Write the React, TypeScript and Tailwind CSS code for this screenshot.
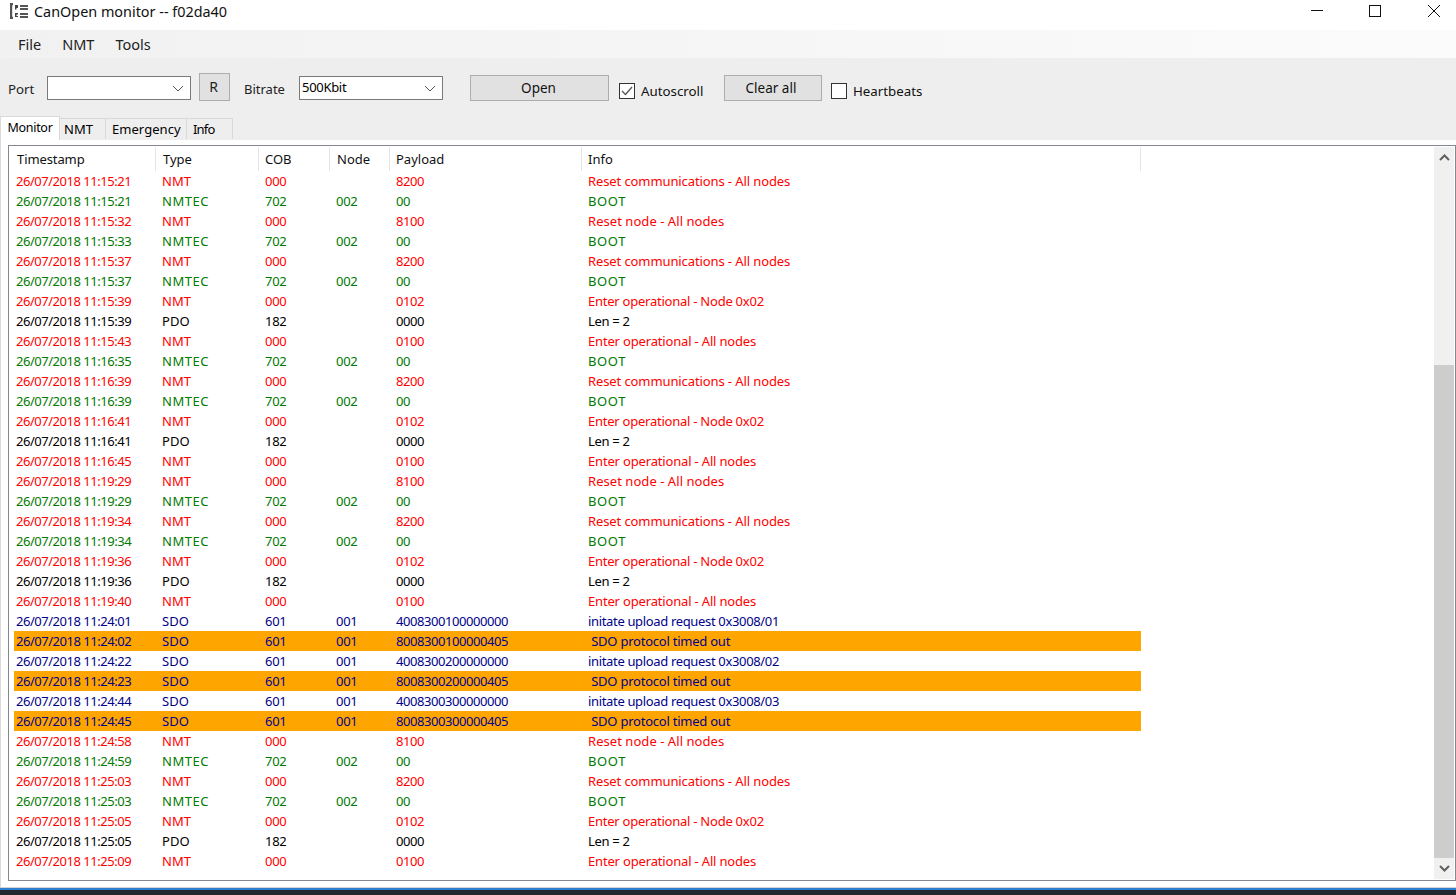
import React from 'react'

type Row = { t: string; k: string; cob: string; node: string; pay: string; info: string; color: string; tr: string; bg?: string }

const RED = 'text-[#ff0000]'
const GREEN = 'text-[#007a00]'
const BLACK = 'text-black'
const BLUE = 'text-[#00008b]'

const nmt = (t: string, pay: string, info: string, tr: string): Row => ({ t, k: 'NMT', cob: '000', node: '', pay, info, color: RED, tr })
const boot = (t: string): Row => ({ t, k: 'NMTEC', cob: '702', node: '002', pay: '00', info: 'BOOT', color: GREEN, tr: 'tracking-[0.6px]' })
const pdo = (t: string): Row => ({ t, k: 'PDO', cob: '182', node: '', pay: '0000', info: 'Len = 2', color: BLACK, tr: 'tracking-[-0.3px]' })
const req = (t: string, pay: string, info: string): Row => ({ t, k: 'SDO', cob: '601', node: '001', pay, info, color: BLUE, tr: 'tracking-[-0.34px]' })
const out = (t: string, pay: string): Row => ({ t, k: 'SDO', cob: '601', node: '001', pay, info: ' SDO protocol timed out', color: BLUE, tr: 'tracking-[-0.23px]', bg: 'bg-[#ffa500]' })

const rc = (t: string) => nmt(t, '8200', 'Reset communications - All nodes', 'tracking-[-0.1px]')
const rn = (t: string) => nmt(t, '8100', 'Reset node - All nodes', 'tracking-[0.05px]')
const eo2 = (t: string) => nmt(t, '0102', 'Enter operational - Node 0x02', 'tracking-[-0.24px]')
const eoa = (t: string) => nmt(t, '0100', 'Enter operational - All nodes', 'tracking-[-0.17px]')

const rows: Row[] = [
  rc('26/07/2018 11:15:21'),
  boot('26/07/2018 11:15:21'),
  rn('26/07/2018 11:15:32'),
  boot('26/07/2018 11:15:33'),
  rc('26/07/2018 11:15:37'),
  boot('26/07/2018 11:15:37'),
  eo2('26/07/2018 11:15:39'),
  pdo('26/07/2018 11:15:39'),
  eoa('26/07/2018 11:15:43'),
  boot('26/07/2018 11:16:35'),
  rc('26/07/2018 11:16:39'),
  boot('26/07/2018 11:16:39'),
  eo2('26/07/2018 11:16:41'),
  pdo('26/07/2018 11:16:41'),
  eoa('26/07/2018 11:16:45'),
  rn('26/07/2018 11:19:29'),
  boot('26/07/2018 11:19:29'),
  rc('26/07/2018 11:19:34'),
  boot('26/07/2018 11:19:34'),
  eo2('26/07/2018 11:19:36'),
  pdo('26/07/2018 11:19:36'),
  eoa('26/07/2018 11:19:40'),
  req('26/07/2018 11:24:01', '4008300100000000', 'initate upload request 0x3008/01'),
  out('26/07/2018 11:24:02', '8008300100000405'),
  req('26/07/2018 11:24:22', '4008300200000000', 'initate upload request 0x3008/02'),
  out('26/07/2018 11:24:23', '8008300200000405'),
  req('26/07/2018 11:24:44', '4008300300000000', 'initate upload request 0x3008/03'),
  out('26/07/2018 11:24:45', '8008300300000405'),
  rn('26/07/2018 11:24:58'),
  boot('26/07/2018 11:24:59'),
  rc('26/07/2018 11:25:03'),
  boot('26/07/2018 11:25:03'),
  eo2('26/07/2018 11:25:05'),
  pdo('26/07/2018 11:25:05'),
  eoa('26/07/2018 11:25:09'),
]

const COLS = 'grid w-[1127px] grid-cols-[142px_103px_71px_60px_192px_559px]'

function HeaderCell({ label, pad }: { label: string; pad: string }) {
  return (
    <div className={`flex h-6 items-center border-r border-[#e5e5e5] pt-[2px] text-[#111] ${pad}`}>
      {label}
    </div>
  )
}

function Caret({ up }: { up?: boolean }) {
  return (
    <svg width="11" height="7" viewBox="0 0 11 7">
      <path d={up ? 'M1 6 L5.5 1.5 L10 6' : 'M1 1 L5.5 5.5 L10 1'} fill="none" stroke="#606060" strokeWidth="2" />
    </svg>
  )
}

function Select({ width, value }: { width: string; value?: string }) {
  return (
    <div className={`flex h-6 items-center justify-between border border-[#7a7a7a] bg-white pl-[2px] pr-[6px] ${width}`}>
      <span className="text-[13px] tracking-[-0.3px]">{value}</span>
      <svg width="12" height="7" viewBox="0 0 12 7">
        <path d="M1 1 L6 6 L11 1" fill="none" stroke="#555" strokeWidth="1" />
      </svg>
    </div>
  )
}

function Check({ checked }: { checked?: boolean }) {
  return (
    <div className="flex h-4 w-4 items-center justify-center border border-[#333] bg-white">
      {checked && (
        <svg width="12" height="10" viewBox="0 0 12 10">
          <path d="M1 5 L4.5 8.5 L11 1" fill="none" stroke="#555" strokeWidth="1.3" />
        </svg>
      )}
    </div>
  )
}

export default function App() {
  return (
    <div className="flex h-[895px] w-[1456px] flex-col overflow-hidden bg-[#f0f0f0] font-['Noto_Sans',sans-serif] text-[13px] text-black">
      {/* title bar */}
      <div className="flex h-[30px] shrink-0 items-start bg-white">
        <svg className="ml-[10px] mr-[6px] mt-[3px]" width="18" height="16" viewBox="0 0 18 16">
          <path d="M3 1 H1 V15 H3" fill="none" stroke="#555" strokeWidth="2.4" />
          <path d="M5 2 H8 V5 H6.5 V6.5 H5 Z M5 10 H8 V11.5 H6.5 V13 H8 V14 H5 Z" fill="#444" />
          <path d="M10 3 H18 M10 6 H18 M10 11 H18 M10 14 H18" stroke="#555" strokeWidth="1.8" />
        </svg>
        <span className="mt-[2px] text-[14.4px] leading-5 text-[#111]">CanOpen monitor -- f02da40</span>
        <div className="ml-auto mt-1 flex items-center">
          <svg width="14" height="14" viewBox="0 0 14 14" className="mr-[44px]">
            <path d="M1 6.5 H13" stroke="#111" strokeWidth="1" />
          </svg>
          <svg width="14" height="14" viewBox="0 0 14 14" className="mr-[45px]">
            <rect x="1.5" y="1.5" width="11" height="11" fill="none" stroke="#111" strokeWidth="1" />
          </svg>
          <svg width="14" height="14" viewBox="0 0 14 14" className="mr-[15px]">
            <path d="M1 1 L13 13 M13 1 L1 13" stroke="#111" strokeWidth="1" />
          </svg>
        </div>
      </div>

      {/* menu */}
      <div className="flex h-[28px] shrink-0 items-center bg-gradient-to-r from-[#f1f1f1] to-[#fbfbfb] pl-[18px] pt-[2px] text-[14.5px] text-[#222]">
        <span className="mr-[21px]">File</span>
        <span className="mr-[21px]">NMT</span>
        <span>Tools</span>
      </div>

      {/* toolbar */}
      <div className="flex h-[58px] shrink-0 items-start bg-[#eeeeee]">
        <span className="ml-2 mt-[22px] w-[39px] text-[13.3px] text-[#222]">Port</span>
        <div className="mt-[18px]">
          <Select width="w-[144px]" />
        </div>
        <div className="ml-2 mt-[15px] flex h-7 w-[31px] items-center justify-center border border-[#adadad] bg-[#e1e1e1] pb-px pr-[2px] text-[14px] text-[#222]">R</div>
        <span className="ml-[14px] mt-[22px] w-[55px] text-[13px] text-[#222]">Bitrate</span>
        <div className="mt-[18px]">
          <Select width="w-[144px]" value="500Kbit" />
        </div>
        <div className="ml-[27px] mt-[17px] flex h-[26px] w-[139px] items-center justify-center border border-[#adadad] bg-[#e1e1e1] pr-[2px] text-[13.5px] text-[#111]">Open</div>
        <div className="ml-[10px] mt-[25px]">
          <Check checked />
        </div>
        <span className="ml-[6px] mt-6 w-[63px] whitespace-nowrap text-[13.3px] text-[#111]">Autoscroll</span>
        <div className="ml-[20px] mt-[17px] flex h-[26px] w-[98px] items-center justify-center border border-[#adadad] bg-[#e1e1e1] pr-1 text-[13.5px] text-[#111]">Clear all</div>
        <div className="ml-[9px] mt-[25px]">
          <Check />
        </div>
        <span className="ml-[6px] mt-6 text-[13.3px] text-[#111]">Heartbeats</span>
      </div>

      {/* tabs */}
      <div className="relative z-10 -mb-px flex h-[24px] shrink-0 items-start bg-[#eeeeee]">
        <div className="flex h-[24px] w-[60px] items-center justify-center border-x border-t border-[#d9d9d9] bg-white text-[12.5px] tracking-[-0.3px]">Monitor</div>
        <div className="mt-[2px] flex h-[21px] w-[46px] items-center border-r border-t border-[#d9d9d9] pl-1 pt-[2px]">NMT</div>
        <div className="mt-[2px] flex h-[21px] w-[81px] items-center border-r border-t border-[#d9d9d9] pl-[6px] pt-[2px] tracking-[0.05px]">Emergency</div>
        <div className="mt-[2px] flex h-[21px] w-[46px] items-center border-r border-t border-[#d9d9d9] pl-[6px] pt-[2px] tracking-[-0.8px]">Info</div>
      </div>

      {/* tab page */}
      <div className="flex-1 border-l border-t border-[#d9d9d9] bg-white pl-[7px] pt-[5px]">
        <div className="flex h-[736px] border border-[#828790] bg-white">
          <div className="flex-1 pl-[5px] pt-px">
            <div className={COLS}>
              <HeaderCell label="Timestamp" pad="pl-[3px] tracking-[-0.1px]" />
              <HeaderCell label="Type" pad="pl-[7px]" />
              <HeaderCell label="COB" pad="pl-[6px]" />
              <HeaderCell label="Node" pad="pl-[7px]" />
              <HeaderCell label="Payload" pad="pl-[6px]" />
              <HeaderCell label="Info" pad="pl-[6px]" />
            </div>
            {rows.map((r, i) => (
              <div key={i} className={`${COLS} h-5 items-center pt-px ${r.color} ${r.bg ?? ''}`}>
                <div className="pl-[2px] tracking-[-0.47px]">{r.t}</div>
                <div className={`pl-[6px] ${r.k === 'NMTEC' ? 'tracking-[0.5px]' : 'tracking-[0.1px]'}`}>{r.k}</div>
                <div className="pl-[6px] tracking-[-0.3px]">{r.cob}</div>
                <div className="pl-[6px] tracking-[-0.3px]">{r.node}</div>
                <div className="pl-[6px] tracking-[-0.44px]">{r.pay}</div>
                <div className={`whitespace-pre pl-[6px] ${r.tr}`}>{r.info}</div>
              </div>
            ))}
          </div>
          {/* scrollbar */}
          <div className="my-px mr-px flex w-5 flex-col bg-[#f0f0f0]">
            <div className="flex h-[21px] items-center justify-center">
              <Caret up />
            </div>
            <div className="h-[197px]" />
            <div className="h-[493px] bg-[#cdcdcd]" />
            <div className="flex h-[21px] items-center justify-center">
              <Caret />
            </div>
          </div>
        </div>
      </div>

      {/* desktop edge below the window */}
      <div className="h-px shrink-0 bg-[#d4d4d4]" />
      <div className="h-[2px] shrink-0 bg-[#2f7fd0]" />
      <div className="h-[5px] shrink-0 bg-[#23272e]" />
    </div>
  )
}
